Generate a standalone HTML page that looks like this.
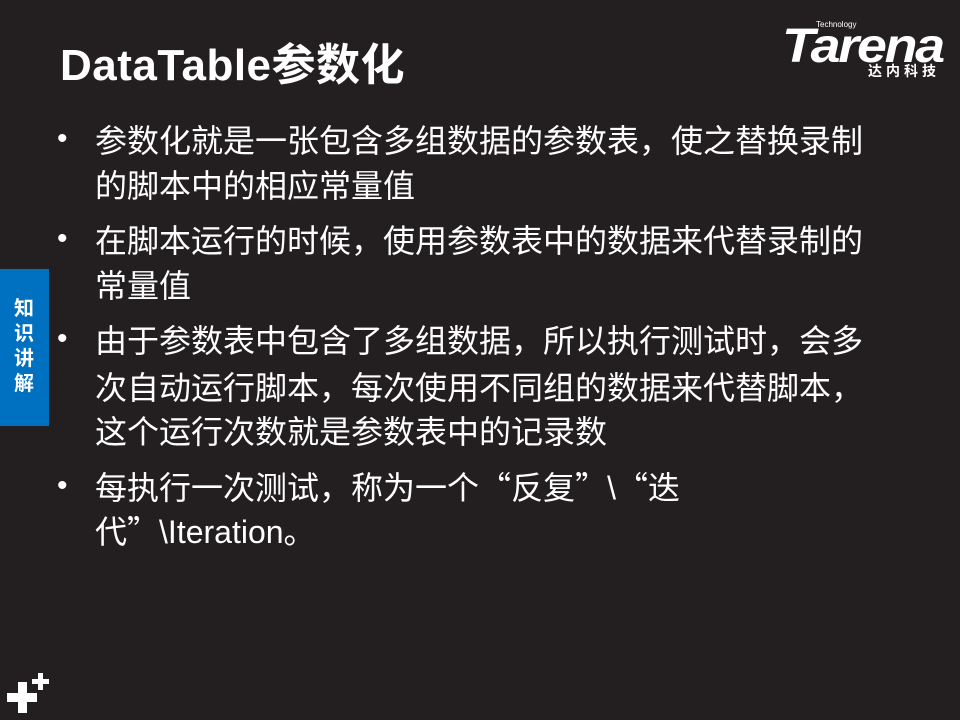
<!DOCTYPE html>
<html><head><meta charset="utf-8"><style>
body{margin:0;width:960px;height:720px;background:#231f20;position:relative;overflow:hidden;font-family:"Liberation Sans","Noto Sans CJK SC",sans-serif;color:#fff}
.t{position:absolute;left:60px;top:38px;font-size:44px;font-weight:bold;line-height:56px;white-space:nowrap;letter-spacing:0.5px}
.l{position:absolute;left:95px;font-size:32px;line-height:40px;white-space:nowrap}
.c{font-family:"Noto Sans CJK SC",sans-serif}
.b{position:absolute;left:57px;font-size:30px;line-height:40px}
.tab{position:absolute;left:0;top:269px;width:49px;height:157px;background:#0070c0;}
.tab div{position:absolute;left:13px;top:28px;width:22px;font-size:20px;font-weight:bold;line-height:25px;text-align:center}
.p{position:absolute;background:#fff}
</style></head><body>
<div class="t">DataTable参数化</div>
<div style="position:absolute;left:780px;top:18px;width:170px;height:65px">
<div style="position:absolute;left:2px;top:4px;font-size:48px;font-weight:bold;font-style:italic;letter-spacing:-2px;line-height:50px;transform:scaleX(1.12);transform-origin:left">Tarena</div>
<div style="position:absolute;left:36px;top:3px;font-size:8px;line-height:8px">Technology</div>
<div style="position:absolute;left:88px;top:45px;font-size:14px;font-weight:bold;letter-spacing:4px;line-height:16px">达内科技</div>
</div>
<div class="b" style="top:119px">•</div>
<div class="l" style="top:119px">参数化就是一张包含多组数据的参数表<span class="c">，</span>使之替换录制</div>
<div class="l" style="top:166px">的脚本中的相应常量值</div>
<div class="b" style="top:219px">•</div>
<div class="l" style="top:219px">在脚本运行的时候<span class="c">，</span>使用参数表中的数据来代替录制的</div>
<div class="l" style="top:266px">常量值</div>
<div class="b" style="top:319px">•</div>
<div class="l" style="top:319px">由于参数表中包含了多组数据<span class="c">，</span>所以执行测试时<span class="c">，</span>会多</div>
<div class="l" style="top:366px">次自动运行脚本<span class="c">，</span>每次使用不同组的数据来代替脚本<span class="c">，</span></div>
<div class="l" style="top:412px">这个运行次数就是参数表中的记录数</div>
<div class="b" style="top:466px">•</div>
<div class="l" style="top:466px">每执行一次测试<span class="c">，</span>称为一个<span class="c">“</span>反复<span class="c">”</span>\<span class="c">“</span>迭</div>
<div class="l" style="top:510px">代<span class="c">”</span>\Iteration<span class="c">。</span></div>
<div class="tab"><div>知识讲解</div></div>
<div class="p" style="left:7px;top:693px;width:30px;height:9px"></div>
<div class="p" style="left:18px;top:682px;width:9px;height:31px"></div>
<div class="p" style="left:32px;top:679px;width:17px;height:5px"></div>
<div class="p" style="left:38px;top:673px;width:5px;height:17px"></div>
</body></html>
